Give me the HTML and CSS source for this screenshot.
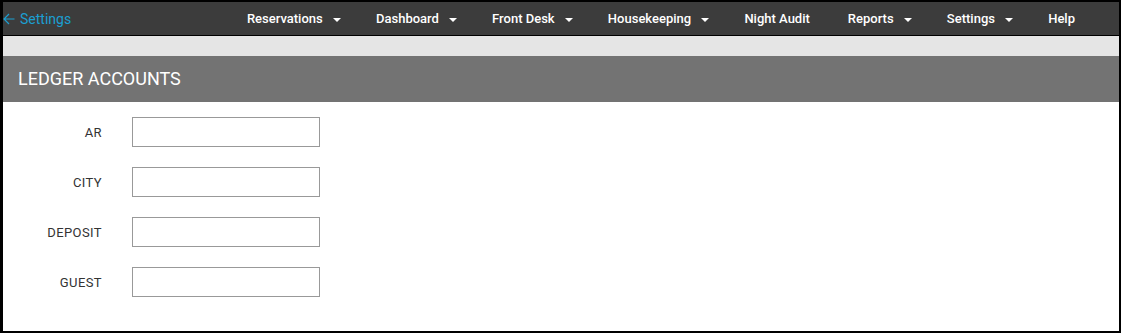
FILE: index.html
```html
<!DOCTYPE html>
<html lang="en">
<head>
  <meta charset="UTF-8">
  <meta name="viewport" content="width=device-width, initial-scale=1.0">
  <title>Ledger Accounts</title>
  <link rel="stylesheet" href="styles.css">
</head>
<body>
  <div class="frame">
    <div class="topbar">
      <a class="back" href="#">
        <svg class="arrow" width="12" height="12" viewBox="0 0 12 12">
          <path d="M11.5 6H1M6 1L1 6l5 5" fill="none" stroke="#1b9fd2" stroke-width="1.2"/>
        </svg>
        Settings
      </a>
      <ul class="menu">
        <li>Reservations <span class="caret"></span></li>
        <li>Dashboard <span class="caret"></span></li>
        <li>Front Desk <span class="caret"></span></li>
        <li>Housekeeping <span class="caret"></span></li>
        <li class="audit">Night Audit</li>
        <li>Reports <span class="caret"></span></li>
        <li>Settings <span class="caret"></span></li>
        <li>Help</li>
      </ul>
    </div>
    <div class="strip"></div>
    <h1 class="title">LEDGER ACCOUNTS</h1>
    <form class="ledger">
      <div class="row">
        <label for="ar">AR</label>
        <input id="ar" type="text">
      </div>
      <div class="row">
        <label for="city">CITY</label>
        <input id="city" type="text">
      </div>
      <div class="row">
        <label for="deposit">DEPOSIT</label>
        <input id="deposit" type="text">
      </div>
      <div class="row">
        <label for="guest">GUEST</label>
        <input id="guest" type="text">
      </div>
    </form>
  </div>
</body>
</html>
```

FILE: styles.css
```css
body {
  margin: 0;
  padding: 0;
  font-family: Roboto, "Liberation Sans", sans-serif;
  background: #fff;
}
.frame {
  box-sizing: border-box;
  width: 1121px;
  height: 333px;
  border: 2px solid #000;
  border-left-width: 3px;
  background: #fff;
}
.topbar {
  display: flex;
  align-items: center;
  height: 33px;
  background-color: #3c3c3c;
  border-bottom: 1px solid #000;
}
.back {
  display: flex;
  align-items: center;
  color: #1b9fd2;
  text-decoration: none;
  font-size: 14px;
}
.back .arrow {
  margin-right: 5px;
}
.menu {
  display: flex;
  list-style: none;
  margin: 0 0 0 auto;
  padding: 0 27px 0 0;
}
.menu li {
  color: #fff;
  font-size: 13px;
  font-weight: 500;
  padding: 0 17px 0 18px;
  white-space: nowrap;
}
.menu li.audit {
  padding-right: 20px;
}
.caret {
  display: inline-block;
  width: 0;
  height: 0;
  margin-left: 7px;
  vertical-align: middle;
  border-left: 4px solid transparent;
  border-right: 4px solid transparent;
  border-top: 4px solid #fff;
}
.strip {
  height: 20px;
  background-color: #e5e5e5;
}
.title {
  margin: 0;
  height: 46px;
  line-height: 46px;
  padding-left: 15px;
  background-color: #737373;
  color: #fff;
  font-size: 18px;
  font-weight: 400;
}
.ledger {
  padding-top: 15px;
}
.row {
  display: flex;
  align-items: center;
  margin-bottom: 20px;
}
.row label {
  width: 99px;
  text-align: right;
  margin-right: 30px;
  font-size: 13px;
  letter-spacing: 0.4px;
  color: #333;
}
.row input {
  box-sizing: border-box;
  width: 188px;
  height: 30px;
  margin: 0;
  border: 1px solid #999;
  border-radius: 0;
  background: #fff;
}
```
